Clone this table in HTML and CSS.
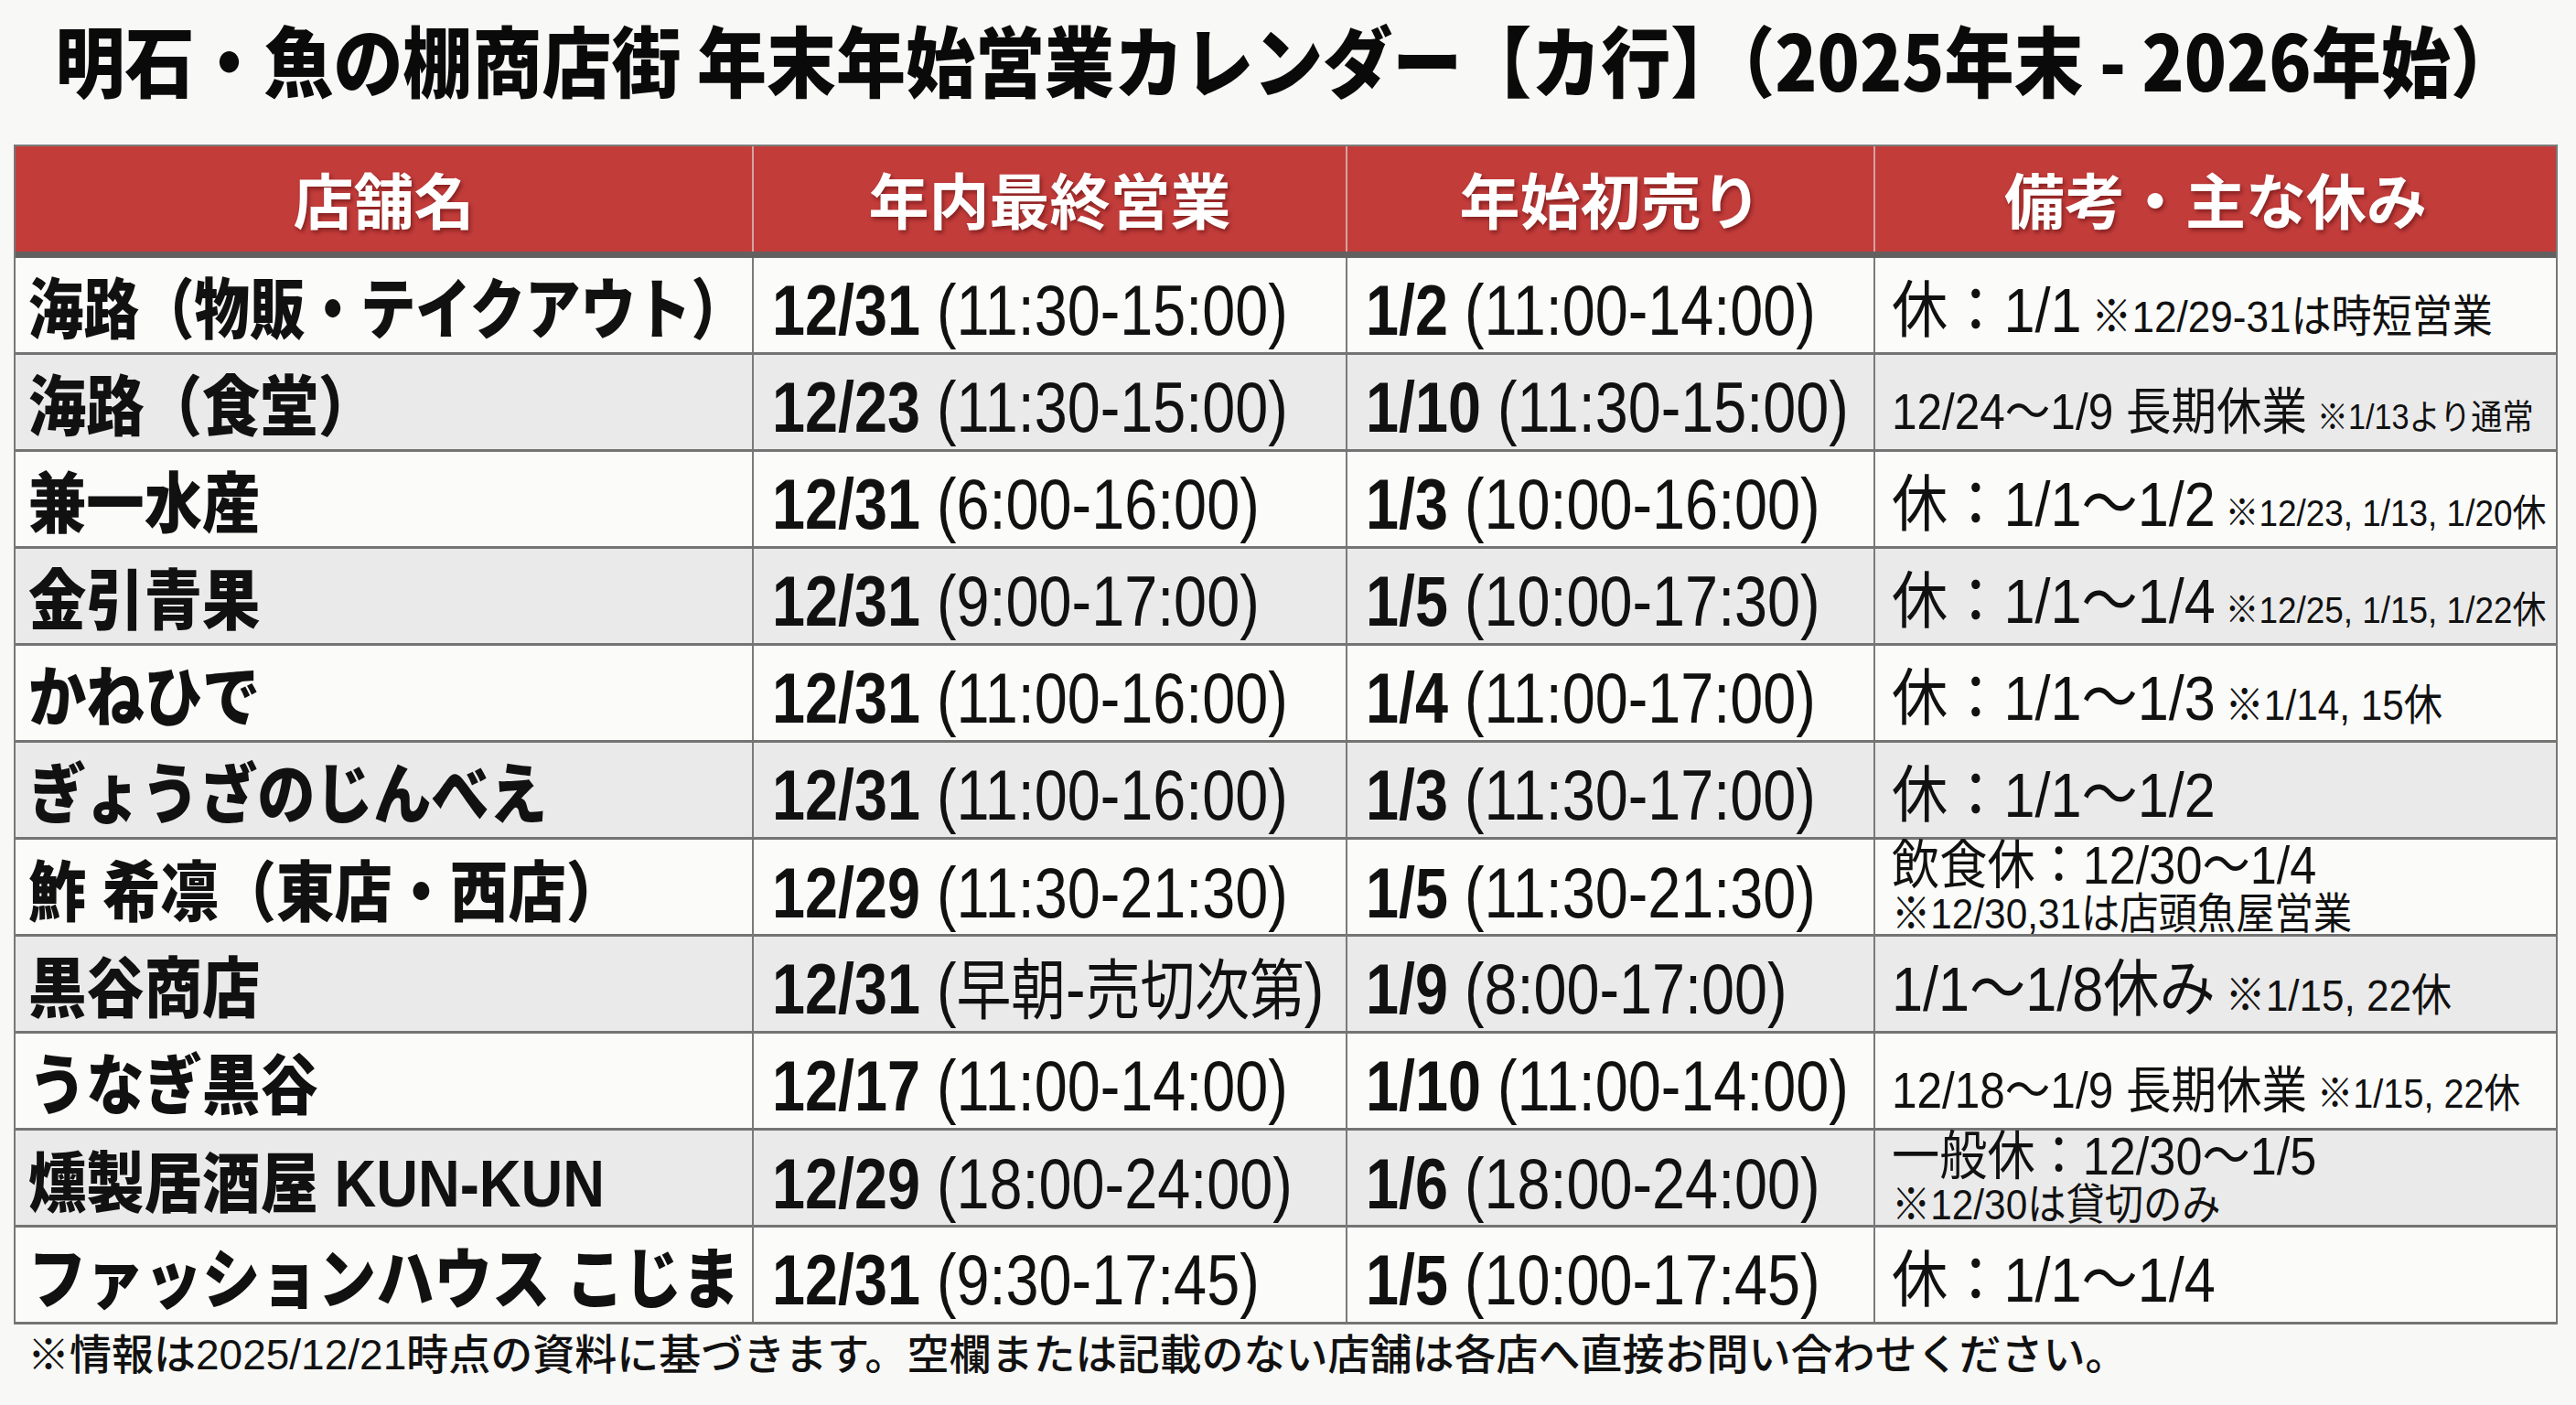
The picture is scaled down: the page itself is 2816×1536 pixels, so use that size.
FILE: index.html
```html
<!DOCTYPE html>
<html lang="ja">
<head>
<meta charset="utf-8">
<title>明石・魚の棚商店街 年末年始営業カレンダー【カ行】</title>
<link rel="stylesheet" href="styles.css">
</head>
<body>
<main class="page">
  <h1 class="title"><span class="title-text">明石・魚の棚商店街 年末年始営業カレンダー【カ行】（2025年末 - 2026年始）</span></h1>

  <div class="table">
    <div class="row head">
      <div class="cell">店舗名</div>
      <div class="cell">年内最終営業</div>
      <div class="cell">年始初売り</div>
      <div class="cell">備考・主な休み</div>
    </div>

    <div class="row">
      <div class="cell name"><span class="fit long">海路（物販・テイクアウト）</span></div>
      <div class="cell time"><span class="fitt"><b>12/31</b> (11:30-15:00)</span></div>
      <div class="cell time"><span class="fitt"><b>1/2</b> (11:00-14:00)</span></div>
      <div class="cell memo"><span class="fit4"><span class="big">休：1/1</span><span class="note n49">※12/29-31は時短営業</span></span></div>
    </div>

    <div class="row">
      <div class="cell name"><span class="fit">海路（食堂）</span></div>
      <div class="cell time"><span class="fitt"><b>12/23</b> (11:30-15:00)</span></div>
      <div class="cell time"><span class="fitt"><b>1/10</b> (11:30-15:00)</span></div>
      <div class="cell memo"><span class="fit4"><span class="big mid">12/24〜1/9 長期休業</span><span class="note n38">※1/13より通常</span></span></div>
    </div>

    <div class="row">
      <div class="cell name"><span class="fit">兼一水産</span></div>
      <div class="cell time"><span class="fitt"><b>12/31</b> (6:00-16:00)</span></div>
      <div class="cell time"><span class="fitt"><b>1/3</b> (10:00-16:00)</span></div>
      <div class="cell memo"><span class="fit4"><span class="big">休：1/1〜1/2</span><span class="note n41">※12/23, 1/13, 1/20休</span></span></div>
    </div>

    <div class="row">
      <div class="cell name"><span class="fit">金引青果</span></div>
      <div class="cell time"><span class="fitt"><b>12/31</b> (9:00-17:00)</span></div>
      <div class="cell time"><span class="fitt"><b>1/5</b> (10:00-17:30)</span></div>
      <div class="cell memo"><span class="fit4"><span class="big">休：1/1〜1/4</span><span class="note n41">※12/25, 1/15, 1/22休</span></span></div>
    </div>

    <div class="row">
      <div class="cell name"><span class="fit">かねひで</span></div>
      <div class="cell time"><span class="fitt"><b>12/31</b> (11:00-16:00)</span></div>
      <div class="cell time"><span class="fitt"><b>1/4</b> (11:00-17:00)</span></div>
      <div class="cell memo"><span class="fit4"><span class="big">休：1/1〜1/3</span><span class="note n47">※1/14, 15休</span></span></div>
    </div>

    <div class="row">
      <div class="cell name"><span class="fit">ぎょうざのじんべえ</span></div>
      <div class="cell time"><span class="fitt"><b>12/31</b> (11:00-16:00)</span></div>
      <div class="cell time"><span class="fitt"><b>1/3</b> (11:30-17:00)</span></div>
      <div class="cell memo"><span class="fit4"><span class="big">休：1/1〜1/2</span></span></div>
    </div>

    <div class="row">
      <div class="cell name"><span class="fit">鮓 希凛（東店・西店）</span></div>
      <div class="cell time"><span class="fitt"><b>12/29</b> (11:30-21:30)</span></div>
      <div class="cell time"><span class="fitt"><b>1/5</b> (11:30-21:30)</span></div>
      <div class="cell memo stacked"><span class="fit4 stack"><span class="line1">飲食休：12/30〜1/4</span><span class="line2">※12/30,31は店頭魚屋営業</span></span></div>
    </div>

    <div class="row">
      <div class="cell name"><span class="fit">黒谷商店</span></div>
      <div class="cell time"><span class="fitt"><b>12/31</b> (<span class="jp">早朝</span>-<span class="jp">売切次第</span>)</span></div>
      <div class="cell time"><span class="fitt"><b>1/9</b> (8:00-17:00)</span></div>
      <div class="cell memo"><span class="fit4"><span class="big">1/1〜1/8休み</span><span class="note n49">※1/15, 22休</span></span></div>
    </div>

    <div class="row">
      <div class="cell name"><span class="fit">うなぎ黒谷</span></div>
      <div class="cell time"><span class="fitt"><b>12/17</b> (11:00-14:00)</span></div>
      <div class="cell time"><span class="fitt"><b>1/10</b> (11:00-14:00)</span></div>
      <div class="cell memo"><span class="fit4"><span class="big mid">12/18〜1/9 長期休業</span><span class="note n44">※1/15, 22休</span></span></div>
    </div>

    <div class="row">
      <div class="cell name"><span class="fit">燻製居酒屋 KUN-KUN</span></div>
      <div class="cell time"><span class="fitt"><b>12/29</b> (18:00-24:00)</span></div>
      <div class="cell time"><span class="fitt"><b>1/6</b> (18:00-24:00)</span></div>
      <div class="cell memo stacked"><span class="fit4 stack"><span class="line1">一般休：12/30〜1/5</span><span class="line2">※12/30は貸切のみ</span></span></div>
    </div>

    <div class="row">
      <div class="cell name"><span class="fit">ファッションハウス こじま</span></div>
      <div class="cell time"><span class="fitt"><b>12/31</b> (9:30-17:45)</span></div>
      <div class="cell time"><span class="fitt"><b>1/5</b> (10:00-17:45)</span></div>
      <div class="cell memo"><span class="fit4"><span class="big">休：1/1〜1/4</span></span></div>
    </div>
  </div>

  <p class="footnote">※情報は2025/12/21時点の資料に基づきます。空欄または記載のない店舗は各店へ直接お問い合わせください。</p>
</main>
</body>
</html>
```

FILE: styles.css
```css
* { box-sizing: border-box; }

html, body {
  margin: 0;
  padding: 0;
}

body {
  width: 2816px;
  height: 1536px;
  overflow: hidden;
  background: #f8f8f6;
  color: #111;
  font-family: "Liberation Sans", "Noto Sans CJK JP", sans-serif;
}

.page {
  padding-top: 22px;
}

.title {
  margin: 0;
  height: 84px;
  display: flex;
  justify-content: center;
  font-family: "Noto Sans CJK JP", sans-serif;
  font-weight: 900;
  font-size: 84px;
  line-height: 84px;
  white-space: nowrap;
  color: #0a0a0a;
}

.title-text {
  flex: none;
  display: block;
  transform: scaleX(0.905);
  transform-origin: center center;
}

.table {
  margin: 52px 0 0 15px;
  width: 2781px;
  border-left: 2px solid #777;
  border-right: 2px solid #777;
}

.row {
  display: grid;
  grid-template-columns: 807px 649px 577px 744px;
  height: 106px;
  border-bottom: 3px solid #747474;
  background: #fbfbfa;
}

.table > .row:nth-child(2n+3) {
  background: #eaeaea;
}

.row.head {
  height: 124px;
  background: #c23c3a;
  border-top: 2px solid #7d7d7d;
  border-bottom: 7px solid #636060;
}

.cell {
  display: flex;
  align-items: center;
  padding-left: 20px;
  padding-top: 10px;
  border-right: 2px solid #7a7a7a;
  white-space: nowrap;
  min-width: 0;
}

.cell:last-child {
  border-right: 0;
}

.head .cell {
  justify-content: center;
  padding: 0 0 4px 0;
  border-right: 2px solid #d4a4a2;
  color: #fff;
  font-family: "Noto Sans CJK JP", sans-serif;
  font-weight: 700;
  font-size: 66px;
  text-shadow: 2px 3px 4px rgba(60, 0, 0, 0.45);
}

.head .cell:last-child {
  border-right: 0;
}

/* 店舗名 */
.name {
  padding-left: 14px;
  font-family: "Liberation Sans", "Noto Sans CJK JP", sans-serif;
  font-weight: 900;
  font-size: 72px;
}

.fit {
  display: inline-block;
  line-height: 1;
  transform: scaleX(0.88);
  transform-origin: left center;
}

.fit.long {
  transform: scaleX(0.84);
}

/* 時間 */
.time {
  font-size: 78px;
  font-weight: 400;
  padding-left: 20px;
}

.fitt {
  display: inline-block;
  line-height: 1;
  transform: scaleX(0.83);
  transform-origin: left center;
}

.time b {
  font-weight: 700;
}

.time .jp {
  font-family: "Noto Sans CJK JP", sans-serif;
  font-size: 72px;
}

/* 備考 */
.memo {
  padding-left: 18px;
}

.memo.stacked {
  padding-top: 0;
}

.fit4 {
  display: inline-block;
  font-size: 68px;
  line-height: 1;
  transform: scaleX(0.9);
  transform-origin: left center;
}

.big {
  font-size: 68px;
}

.big.mid {
  font-size: 55px;
}

.note {
  margin-left: 12px;
}

.n38 { font-size: 38px; }
.n41 { font-size: 41px; }
.n44 { font-size: 44px; }
.n47 { font-size: 47px; }
.n49 { font-size: 49px; }

.fit4.stack {
  display: flex;
  flex-direction: column;
  align-items: flex-start;
}

.line1 {
  font-size: 58px;
  line-height: 56px;
}

.line2 {
  font-size: 47px;
  line-height: 50px;
}

.footnote {
  margin: 10px 0 0 30px;
  font-family: "Liberation Sans", "Noto Sans CJK JP", sans-serif;
  font-weight: 500;
  font-size: 46px;
  line-height: 46px;
  white-space: nowrap;
}
```
